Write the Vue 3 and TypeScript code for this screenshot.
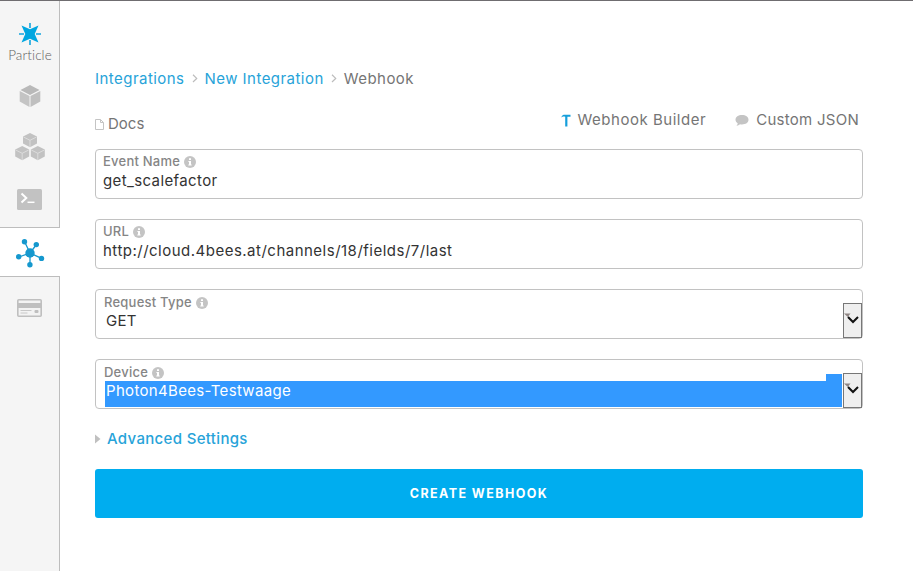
<script setup lang="ts">
interface Field {
  id: string
  label: string
  value: string
  select: boolean
  highlighted: boolean
}

const fields: Field[] = [
  { id: 'event', label: 'Event Name', value: 'get_scalefactor', select: false, highlighted: false },
  { id: 'url', label: 'URL', value: 'http://cloud.4bees.at/channels/18/fields/7/last', select: false, highlighted: false },
  { id: 'request', label: 'Request Type', value: 'GET', select: true, highlighted: false },
  { id: 'device', label: 'Device', value: 'Photon4Bees-Testwaage', select: true, highlighted: true },
]
</script>

<template>
  <div class="page">
    <nav class="sidebar">
      <a class="logo">
        <svg width="24" height="24" viewBox="0 0 24 24">
          <path d="M3.500 3.500 12 7.300 20.500 3.500 16.700 12 20.500 20.500 12 16.700 3.500 20.500 7.300 12Z" fill="#00a6e0" />
          <path d="M12 1v5M12 18v5M1 12h5M18 12h5" stroke="#14a5de" stroke-width="1.6" />
        </svg>
        <span class="brand">Particle</span>
      </a>
      <a class="item cube">
        <svg width="22" height="24" viewBox="0 0 22 24">
          <path d="M11 1 20.500 6 11 11 1.500 6Z" fill="#b9b9b9" />
          <path d="M0.700 7 10.500 12V23L0.700 17.500Z" fill="#c4c4c4" />
          <path d="M21.300 7 11.500 12V23L21.300 17.500Z" fill="#bfbfbf" />
        </svg>
      </a>
      <a class="item cubes">
        <svg width="30" height="28" viewBox="0 0 30 28">
          <g v-for="p in [[8, 0], [0.2, 13], [15.8, 13]]" :key="p[0]" :transform="`translate(${p[0]} ${p[1]})`">
            <path d="M7 0 14 3.5V10.5L7 14.3 0 10.5V3.5Z" fill="#c2c2c2" />
            <path d="M0.5 4 7 7.3 13.5 4M7 7.3V14" fill="none" stroke="#e2e2e2" stroke-width="0.8" />
          </g>
        </svg>
      </a>
      <a class="item console">
        <svg width="25" height="21" viewBox="0 0 25 21">
          <rect width="25" height="21" rx="1.5" fill="#c2c2c2" />
          <path d="M4.5 4.5 9.3 9 4.5 13.5" fill="none" stroke="#fff" stroke-width="2" />
          <path d="M10.5 13.3h7" stroke="#fff" stroke-width="1.5" />
        </svg>
      </a>
      <a class="item active">
        <svg width="30" height="30" viewBox="0 0 30 30">
          <path d="M15 15 9.5 3.5M15 15 21.5 6.5M15 15 4 19M15 15 26.5 20.3M15 15V26.5" stroke="#1598ce" stroke-width="1.3" />
          <circle cx="15" cy="15" r="4.7" fill="#1598ce" />
          <g fill="#1598ce">
            <circle cx="9.5" cy="3.7" r="2.7" />
            <circle cx="21.3" cy="6.6" r="2.7" />
            <circle cx="3.7" cy="18.8" r="2.7" />
            <circle cx="26.5" cy="20.4" r="2.7" />
            <circle cx="14.9" cy="26.7" r="2.7" />
          </g>
        </svg>
      </a>
      <a class="item card">
        <svg width="25" height="18" viewBox="0 0 25 18">
          <rect x="0.8" y="0.8" width="23.4" height="16.4" rx="1" fill="#f3f3f3" stroke="#bfbfbf" stroke-width="1.6" />
          <path d="M1 4h23v5H1z" fill="#bfbfbf" />
          <path d="M3.5 11.5h11M3.5 14h7" stroke="#c8c8c8" />
          <rect x="17.5" y="11" width="4" height="3" rx="1" fill="#bfbfbf" />
        </svg>
      </a>
    </nav>

    <main class="content">
      <div class="crumbs">
        <a class="c1">Integrations</a>
        <svg class="chev" width="6" height="9" viewBox="0 0 6 9"><path d="M1 0.8 4.7 4.4 1 8" fill="none" stroke="#bcbcbc" stroke-width="1.2" /></svg>
        <a class="c2">New Integration</a>
        <svg class="chev" width="6" height="9" viewBox="0 0 6 9"><path d="M1 0.8 4.7 4.4 1 8" fill="none" stroke="#bcbcbc" stroke-width="1.2" /></svg>
        <span class="c3">Webhook</span>
      </div>

      <div class="toolbar">
        <a class="docs">
          <svg width="9" height="11" viewBox="0 0 9 11"><path d="M0.5 0.5H5.5L8.5 3.5V10.5H0.5ZM5.5 0.5V3.5H8.5" fill="none" stroke="#c4c4c4" /></svg>
          <span>Docs</span>
        </a>
        <div class="tabs">
          <a class="tab builder">
            <svg width="10" height="13" viewBox="0 0 10 13"><path d="M0.3 3.400C1 1.300 2.200 0.800 3.800 0.800H9.500V2.800H6.400V12.500H4.200V2.800C2.500 2.400 1.500 2.500 0.300 3.400Z" fill="#169fdb" /></svg>
            <span>Webhook Builder</span>
          </a>
          <a class="tab json">
            <svg width="14" height="11" viewBox="0 0 14 11"><path d="M7 0C10.7 0 13.5 2 13.5 4.8S10.7 9.5 7 9.5C6.300 9.500 5.600 9.400 5 9.300 4 10.300 2.700 10.800 1.500 10.700 2.300 10 2.700 9.200 2.700 8.300 1.300 7.500.5 6.200.5 4.800.5 2 3.300 0 7 0Z" fill="#c4c4c4" /></svg>
            <span>Custom JSON</span>
          </a>
        </div>
      </div>

      <form class="fields" @submit.prevent>
        <div v-for="f in fields" :key="f.id" class="field" :class="[f.id, { select: f.select, highlighted: f.highlighted }]">
          <div class="label">
            <span class="label-text">{{ f.label }}</span>
            <svg width="12" height="12" viewBox="0 0 12 12">
              <circle cx="6" cy="6" r="6" fill="#c4c4c4" />
              <path d="M5 2.300H7V4H5ZM4.400 5H7V8.600H7.700V9.600H4.300V8.600H5V6H4.400Z" fill="#fff" />
            </svg>
          </div>
          <div class="value"><span>{{ f.value }}</span></div>
          <i v-if="f.highlighted" class="notch"></i>
          <span v-if="f.select" class="arrow">
            <svg width="17" height="33" viewBox="0 0 17 33">
              <path d="M0 9.500H6.500L3.800 13Z" fill="#8f8583" />
              <path d="M4 13 9 18 14 13" fill="none" stroke="#111" stroke-width="2" />
            </svg>
          </span>
        </div>
      </form>

      <a class="advanced">
        <svg width="6" height="10" viewBox="0 0 6 10"><path d="M0 0.500 5.500 5 0 9.500Z" fill="#c0c0c0" /></svg>
        <span>Advanced Settings</span>
      </a>
      <button class="create" type="button">CREATE WEBHOOK</button>
    </main>
  </div>
</template>

<style>
body {
  margin: 0;
  overflow: hidden;
}
</style>

<style scoped>
.page {
  box-sizing: border-box;
  display: flex;
  width: 100vw;
  height: 100vh;
  border-top: 1px solid #6f6d70;
  background: #fff;
  color: #757575;
  font-family: Inter, "Liberation Sans", sans-serif;
  font-size: 15px;
  line-height: 20px;
}
svg {
  display: block;
  flex: none;
}
.sidebar {
  box-sizing: border-box;
  width: 60px;
  flex: none;
  background: linear-gradient(to right, #f5f5f5 59px, #bdbdbd 59px);
  display: flex;
  flex-direction: column;
}
.logo {
  display: flex;
  flex-direction: column;
  align-items: center;
  width: 60px;
  height: 70px;
  padding-top: 21px;
  box-sizing: border-box;
}
.brand {
  color: #606060;
  font-family: Lato, sans-serif;
  font-weight: 300;
  font-size: 13.5px;
  line-height: 18px;
  letter-spacing: 0.1px;
}
.item {
  display: flex;
  align-items: center;
  justify-content: center;
  width: 59px;
  height: 50px;
}
.cubes {
  height: 51px;
}
.console {
  height: 55px;
}
.active {
  box-sizing: border-box;
  width: 60px;
  height: 50px;
  padding-top: 1px;
  background: #fff;
  border-top: 1px solid #bdbdbd;
  border-bottom: 1px solid #bdbdbd;
}
.card {
  height: 61px;
}
.content {
  width: 768px;
  padding: 68px 0 0 35px;
  display: flex;
  flex-direction: column;
}
.crumbs {
  display: flex;
  align-items: center;
  height: 20px;
  letter-spacing: 0.46px;
}
.crumbs a,
.advanced {
  color: #27a3d9;
}
.chev {
  margin: 0 7px 2px 7px;
}
.toolbar {
  display: flex;
  justify-content: space-between;
  height: 60px;
}
.docs {
  display: flex;
  align-items: center;
  gap: 4px;
  height: 20px;
  padding-top: 25px;
}
.tabs {
  display: flex;
  gap: 29px;
  padding-top: 21px;
  height: 20px;
  padding-right: 4px;
}
.tab {
  display: flex;
  align-items: center;
  gap: 6px;
}
.builder {
  letter-spacing: 0.53px;
}
.json {
  gap: 7px;
  letter-spacing: 0.27px;
}
.fields {
  display: flex;
  flex-direction: column;
  gap: 20px;
}
.field {
  position: relative;
  box-sizing: border-box;
  height: 50px;
  border: 1px solid #c2c2c2;
  border-radius: 4px;
  padding: 3px 0 0 7px;
}
.label {
  display: flex;
  align-items: center;
  gap: 4px;
  height: 17px;
  font-size: 13px;
  line-height: 16px;
  font-weight: 500;
  letter-spacing: 0.23px;
  color: #858585;
}
.label-text {
  margin-top: -1px;
}
.value {
  height: 22px;
  line-height: 22px;
  letter-spacing: 0.38px;
  color: #333;
}
.url .value {
  letter-spacing: 0.49px;
}
.select {
  padding: 4px 0 0 8px;
}
.select .value {
  box-sizing: border-box;
  width: 738px;
  height: 26px;
  line-height: 20px;
  padding-left: 2px;
  letter-spacing: 0.33px;
}
.highlighted .value {
  margin-left: 1px;
  width: 737px;
  padding-left: 1px;
  background: #3399ff;
  color: #fff;
}
.notch {
  position: absolute;
  right: 20px;
  top: 14px;
  width: 16px;
  height: 7px;
  background: #3399ff;
}
.arrow {
  position: absolute;
  right: 0;
  top: 13px;
  width: 17px;
  height: 33px;
  border: 1px solid #777;
  background: #efefef;
}
.advanced {
  display: flex;
  align-items: center;
  gap: 6px;
  height: 20px;
  margin-top: 20px;
  font-weight: 500;
  letter-spacing: 0.33px;
}
.create {
  height: 49px;
  margin-top: 20px;
  padding: 0;
  border: 0;
  border-radius: 3px;
  background: #00adef;
  color: #fff;
  font-family: inherit;
  font-size: 12.5px;
  font-weight: 700;
  letter-spacing: 1.42px;
}
</style>
